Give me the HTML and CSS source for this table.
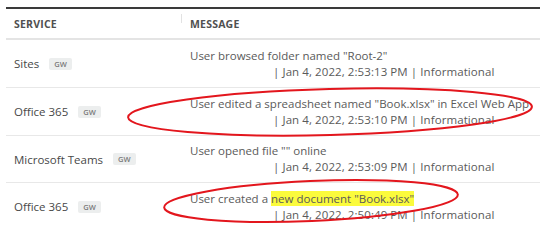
FILE: index.html
```html
<!DOCTYPE html>
<html>
<head>
<meta charset="utf-8">
<link rel="stylesheet" href="styles.css">
</head>
<body>
<div class="page">
  <div class="table">
    <div class="head">
      <div class="col-service">SERVICE</div>
      <div class="col-message"><span class="divider"></span>MESSAGE</div>
    </div>
    <div class="row">
      <div class="col-service"><span class="name">Sites</span><span class="badge">GW</span></div>
      <div class="col-message">
        <div class="msg">User browsed folder named "Root-2"</div>
        <div class="meta">| Jan 4, 2022, 2:53:13 PM | Informational</div>
      </div>
    </div>
    <div class="row">
      <div class="col-service"><span class="name">Office 365</span><span class="badge">GW</span></div>
      <div class="col-message">
        <div class="msg">User edited a spreadsheet named "Book.xlsx" in Excel Web App</div>
        <div class="meta">| Jan 4, 2022, 2:53:10 PM | Informational</div>
      </div>
    </div>
    <div class="row short">
      <div class="col-service"><span class="name">Microsoft Teams</span><span class="badge">GW</span></div>
      <div class="col-message">
        <div class="msg">User opened file "" online</div>
        <div class="meta">| Jan 4, 2022, 2:53:09 PM | Informational</div>
      </div>
    </div>
    <div class="row last">
      <div class="col-service"><span class="name">Office 365</span><span class="badge">GW</span></div>
      <div class="col-message">
        <div class="msg">User created a <span class="hl">new document "Book.xlsx"</span></div>
        <div class="meta">| Jan 4, 2022, 2:50:49 PM | Informational</div>
      </div>
    </div>
  </div>
  <svg class="marks" width="540" height="250" viewBox="0 0 540 250">
    <ellipse cx="330" cy="112" rx="202" ry="23" transform="rotate(-1.5 330 112)" fill="none" stroke="#e3161d" stroke-width="2"/>
    <ellipse cx="311" cy="201" rx="147" ry="20" transform="rotate(-2.5 311 201)" fill="none" stroke="#e3161d" stroke-width="2"/>
  </svg>
</div>
</body>
</html>
```
FILE: styles.css
```css
html, body {
  margin: 0;
  padding: 0;
  background: #ffffff;
}
.page {
  position: relative;
  width: 540px;
  height: 250px;
  overflow: hidden;
  font-family: "Open Sans", "Noto Sans", sans-serif;
}
.table {
  margin-left: 6px;
  padding-top: 7px;
}
.head {
  display: flex;
  align-items: center;
  border-top: 2px solid #3a3a3a;
  border-bottom: 2px solid #e4e4e4;
  box-sizing: border-box;
  height: 33px;
  font-size: 10.5px;
  font-weight: 700;
  color: #505050;
  letter-spacing: 0.2px;
}
.col-service {
  width: 175px;
  padding-left: 8px;
  box-sizing: border-box;
  display: flex;
  align-items: center;
}
.col-message {
  flex: 1;
  padding-left: 9px;
  display: flex;
  flex-direction: column;
  position: relative;
}
.head .col-message {
  flex-direction: row;
  align-items: center;
}
.divider {
  position: absolute;
  left: 0;
  top: -3px;
  width: 1px;
  height: 9px;
  background: #e2e2e2;
}
.row {
  display: flex;
  align-items: center;
  height: 47px;
  border-bottom: 1px solid #e8e8e8;
  font-size: 11.5px;
  color: #5a5a5a;
}
.row.short {
  height: 46px;
}
.row.last {
  border-bottom: none;
}
.name {
  color: #484848;
  font-size: 11.5px;
}
.badge {
  margin-left: 10px;
  background: #eceeee;
  color: #7a7a7a;
  font-size: 7.5px;
  font-weight: 600;
  line-height: 12px;
  padding: 0 5px;
  border-radius: 2px;
}
.msg, .meta {
  line-height: 16px;
  white-space: nowrap;
}
.meta {
  padding-left: 83px;
  letter-spacing: 0.08px;
}
.hl {
  background: #fbfb3c;
}
.marks {
  position: absolute;
  left: 0;
  top: 0;
  pointer-events: none;
}
```
